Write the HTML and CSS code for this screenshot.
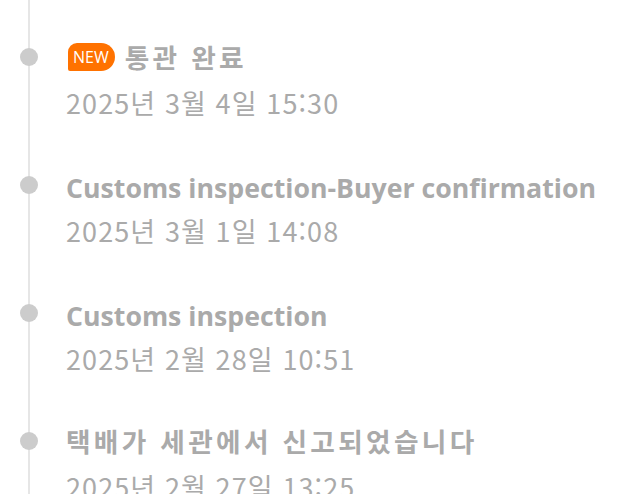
FILE: index.html
```html
<!DOCTYPE html>
<html lang="ko">
<head>
<meta charset="utf-8">
<link rel="stylesheet" href="styles.css">
</head>
<body>
<ul class="timeline">
  <li class="event">
    <span class="dot"></span>
    <div class="title title-ko"><span class="badge">NEW</span>통관 완료</div>
    <div class="time">2025년 3월 4일 15:30</div>
  </li>
  <li class="event">
    <span class="dot"></span>
    <div class="title title-en">Customs inspection-Buyer confirmation</div>
    <div class="time">2025년 3월 1일 14:08</div>
  </li>
  <li class="event">
    <span class="dot"></span>
    <div class="title title-en">Customs inspection</div>
    <div class="time">2025년 2월 28일 10:51</div>
  </li>
  <li class="event">
    <span class="dot"></span>
    <div class="title title-ko">택배가 세관에서 신고되었습니다</div>
    <div class="time">2025년 2월 27일 13:25</div>
  </li>
</ul>
</body>
</html>
```
FILE: styles.css
```css
html, body {
  margin: 0;
  padding: 0;
  background: #fff;
  overflow: hidden;
}

body {
  font-family: "Open Sans", "Noto Sans CJK KR", sans-serif;
  color: #aaaaaa;
}

.timeline {
  list-style: none;
  margin: 0 0 0 28px;
  padding: 34px 0 0 0;
  border-left: 2px solid #e6e6e6;
  min-height: 600px;
}

.event {
  position: relative;
  padding-left: 36px;
  margin-bottom: 36px;
}

.dot {
  position: absolute;
  left: -10px;
  top: 14px;
  width: 18px;
  height: 18px;
  border-radius: 50%;
  background: #cccccc;
}

.title {
  display: flex;
  align-items: center;
  font-size: 26.7px;
  font-weight: 700;
  line-height: 46px;
  white-space: nowrap;
}

/* Latin titles sit a little lower in the row */
.title-en {
  padding-top: 6px;
  line-height: 40px;
}

.title-ko {
  font-family: "Noto Sans CJK KR", sans-serif;
  letter-spacing: 3.3px;
}

.badge {
  display: inline-block;
  margin: 0 10px 0 2px;
  background: #ff7200;
  color: #fff;
  font-family: "Open Sans", sans-serif;
  font-size: 16px;
  font-weight: 400;
  letter-spacing: 0;
  line-height: 28px;
  height: 28px;
  padding: 0 6px 0 5px;
  border-radius: 9px 14px 14px 2px;
}

.time {
  font-family: "Noto Sans CJK KR", sans-serif;
  font-size: 27px;
  letter-spacing: 1.1px;
  line-height: 46px;
  white-space: nowrap;
}
```
